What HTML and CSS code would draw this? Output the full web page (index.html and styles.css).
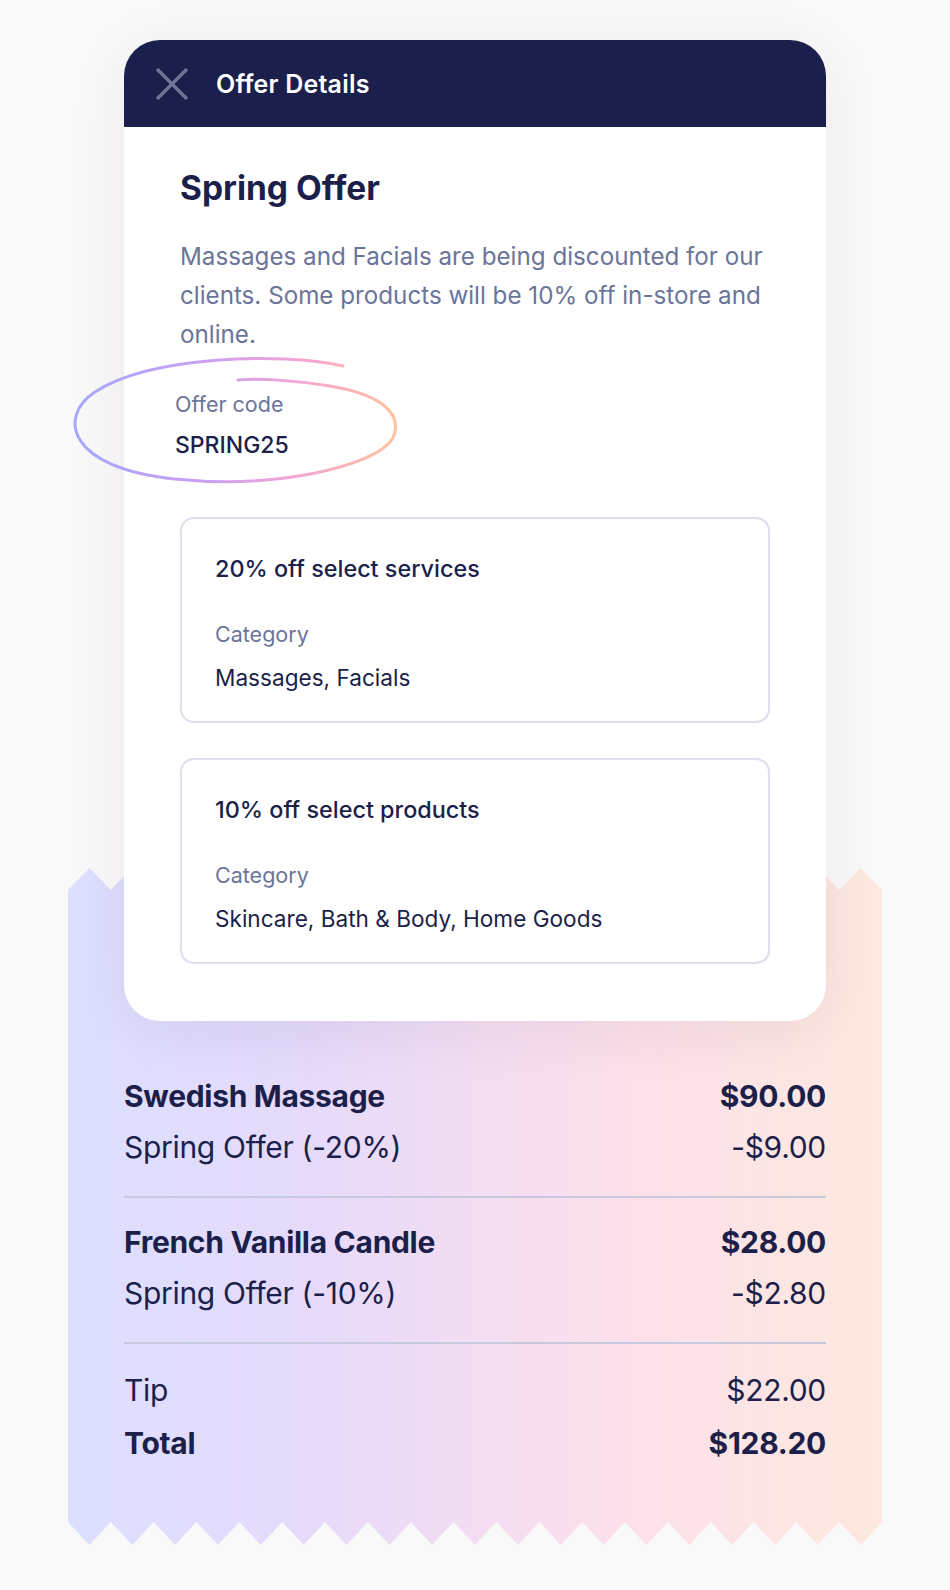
FILE: index.html
```html
<!DOCTYPE html>
<html>
<head>
<meta charset="utf-8">
<link rel="stylesheet" href="styles.css">
</head>
<body>
<main class="page">
  <section class="card">
    <header class="card-head">
      <svg class="close" viewBox="0 0 34 34" width="34" height="34"><path d="M2 2 L32 32 M32 2 L2 32" stroke="#6e7798" stroke-width="3.2" stroke-linecap="butt" fill="none"/></svg>
      <h1 class="head-title">Offer Details</h1>
    </header>
    <div class="card-body">
      <h2 class="offer-title">Spring Offer</h2>
      <p class="offer-desc">Massages and Facials are being discounted for our clients. Some products will be 10% off in-store and online.</p>
      <div class="code-block">
        <svg class="scribble" viewBox="60 340 360 160" width="360" height="160">
          <defs>
            <linearGradient id="sg" x1="70" y1="0" x2="400" y2="0" gradientUnits="userSpaceOnUse">
              <stop offset="0" stop-color="#a3a8ff"/>
              <stop offset="0.4" stop-color="#c9a0f2"/>
              <stop offset="0.7" stop-color="#f5a6d3"/>
              <stop offset="1" stop-color="#ffc49c"/>
            </linearGradient>
          </defs>
          <path d="M343 366 C 280 352, 150 356, 95 392 C 58 416, 66 468, 175 479 C 270 489, 375 468, 393 438 C 404 412, 378 394, 330 386 C 300 381, 262 378, 238 380" fill="none" stroke="url(#sg)" stroke-width="3" stroke-linecap="round"/>
        </svg>
        <div class="code-label">Offer code</div>
        <div class="code-value">SPRING25</div>
      </div>
      <div class="rule-box">
        <div class="rule-title">20% off select services</div>
        <div class="rule-label">Category</div>
        <div class="rule-value">Massages, Facials</div>
      </div>
      <div class="rule-box">
        <div class="rule-title">10% off select products</div>
        <div class="rule-label">Category</div>
        <div class="rule-value">Skincare, Bath &amp; Body, Home Goods</div>
      </div>
    </div>
  </section>
  <section class="receipt">
    <div class="group">
      <div class="row strong"><span>Swedish Massage</span><span>$90.00</span></div>
      <div class="row"><span>Spring Offer (-20%)</span><span>-$9.00</span></div>
    </div>
    <div class="group">
      <div class="row strong"><span>French Vanilla Candle</span><span>$28.00</span></div>
      <div class="row"><span>Spring Offer (-10%)</span><span>-$2.80</span></div>
    </div>
    <div class="group last">
      <div class="row"><span>Tip</span><span>$22.00</span></div>
      <div class="row strong"><span>Total</span><span>$128.20</span></div>
    </div>
  </section>
</main>
</body>
</html>
```

FILE: styles.css
```css
* { box-sizing: border-box; }
html, body { margin: 0; padding: 0; }
body {
  background: #faf9f9;
  font-family: "Inter", "Noto Sans", sans-serif;
  color: #1c1f4a;
  width: 950px;
  height: 1590px;
  overflow: hidden;
}
.page {
  display: flex;
  flex-direction: column;
  align-items: center;
  padding-top: 40px;
}
.card {
  position: relative;
  z-index: 2;
  width: 702px;
  background: #fff;
  border-radius: 36px;
  box-shadow: 0 10px 60px rgba(40, 30, 60, 0.07);
}
.card-head {
  height: 87px;
  background: #1b1f4b;
  border-radius: 36px 36px 0 0;
  display: flex;
  align-items: center;
  padding-left: 31px;
  gap: 27px;
}
.close { display: block; }
.head-title {
  margin: 0;
  color: #fff;
  font-size: 25px;
  font-weight: 600;
  letter-spacing: 0.2px;
}
.card-body {
  padding: 39px 56px 57px;
}
.offer-title {
  margin: 0;
  font-size: 33.5px;
  font-weight: 700;
  line-height: 44px;
}
.offer-desc {
  margin: 27px 0 0;
  font-size: 24.2px;
  line-height: 39px;
  color: #6b7499;
}
.code-block {
  position: relative;
  margin: 37px 0 0 -5px;
}
.scribble {
  position: absolute;
  left: -115px;
  top: -51px;
  pointer-events: none;
}
.code-label {
  font-size: 21.5px;
  line-height: 26px;
  color: #6b7499;
}
.code-value {
  margin-top: 14px;
  font-size: 23px;
  line-height: 28px;
  color: #1c1f4a;
  font-weight: 500;
}
.rule-box {
  margin-top: 58px;
  border: 2px solid #dcdfec;
  border-radius: 14px;
  padding: 34px 33px 28px;
}
.rule-box + .rule-box { margin-top: 35px; }
.rule-title {
  font-size: 23.4px;
  line-height: 32px;
  font-weight: 500;
}
.rule-label {
  margin-top: 35px;
  font-size: 21.5px;
  line-height: 28px;
  color: #6b7499;
}
.rule-value {
  margin-top: 15px;
  font-size: 22.6px;
  line-height: 30px;
}
.rule-box:first-of-type .rule-value { font-size: 22.4px; }
.receipt {
  width: 814px;
  margin-top: -153px;
  padding: 203px 56px 76px;
  background: linear-gradient(90deg, #dcdfff 0%, #e6dafb 30%, #f6def0 55%, #fde0ea 70%, #fde9df 100%);
  clip-path: polygon(
    0 22px, 21.4px 0, 42.8px 22px, 64.3px 0, 85.7px 22px, 107.1px 0, 128.5px 22px, 150px 0, 171.4px 22px,
    192.8px 0, 214.2px 22px, 235.7px 0, 257.1px 22px, 278.5px 0, 299.9px 22px, 321.4px 0, 342.8px 22px,
    364.2px 0, 385.6px 22px, 407px 0, 428.5px 22px, 449.9px 0, 471.3px 22px, 492.7px 0, 514.2px 22px,
    535.6px 0, 557px 22px, 578.4px 0, 599.9px 22px, 621.3px 0, 642.7px 22px, 664.1px 0, 685.6px 22px,
    707px 0, 728.4px 22px, 749.8px 0, 771.3px 22px, 792.7px 0, 814px 22px,
    814px calc(100% - 23px), 792.7px 100%, 771.3px calc(100% - 23px), 749.8px 100%, 728.4px calc(100% - 23px),
    707px 100%, 685.6px calc(100% - 23px), 664.1px 100%, 642.7px calc(100% - 23px), 621.3px 100%,
    599.9px calc(100% - 23px), 578.4px 100%, 557px calc(100% - 23px), 535.6px 100%, 514.2px calc(100% - 23px),
    492.7px 100%, 471.3px calc(100% - 23px), 449.9px 100%, 428.5px calc(100% - 23px), 407px 100%,
    385.6px calc(100% - 23px), 364.2px 100%, 342.8px calc(100% - 23px), 321.4px 100%, 299.9px calc(100% - 23px),
    278.5px 100%, 257.1px calc(100% - 23px), 235.7px 100%, 214.2px calc(100% - 23px), 192.8px 100%,
    171.4px calc(100% - 23px), 150px 100%, 128.5px calc(100% - 23px), 107.1px 100%, 85.7px calc(100% - 23px),
    64.3px 100%, 42.8px calc(100% - 23px), 21.4px 100%, 0 calc(100% - 23px)
  );
}
.group {
  padding-bottom: 23px;
  border-bottom: 2px solid #c5cadf;
  margin-bottom: 19px;
}
.group.last { border-bottom: 0; margin-bottom: 0; padding-bottom: 0; padding-top: 2px; }
.group.last .row + .row { margin-top: 2px; }
.row {
  display: flex;
  justify-content: space-between;
  font-size: 30px;
  line-height: 51px;
  color: #1c1f4a;
  letter-spacing: -0.3px;
}
.row.strong { font-weight: 700; }
```
